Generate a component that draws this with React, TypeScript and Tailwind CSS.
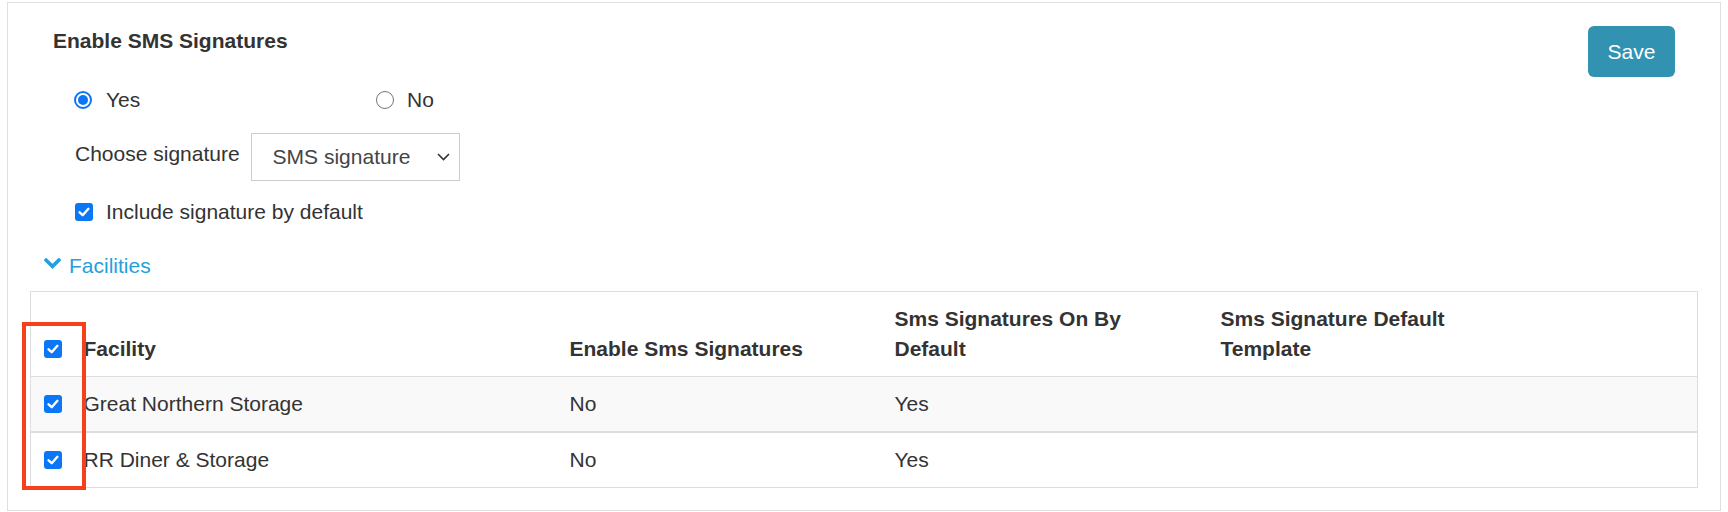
import React, { useState } from 'react'

interface FacilityRow {
  name: string
  enabled: string
  onByDefault: string
  template: string
}

const rows: FacilityRow[] = [
  { name: 'Great Northern Storage', enabled: 'No', onByDefault: 'Yes', template: '' },
  { name: 'RR Diner & Storage', enabled: 'No', onByDefault: 'Yes', template: '' }
]

const CheckBox = () => (
  <span className="flex h-[18px] w-[18px] shrink-0 items-center justify-center rounded-[3px] bg-[#0b76f6]">
    <svg width="12" height="10" viewBox="0 0 12 10">
      <path
        d="M1.6 5.3 L4.7 8.2 L10.4 1.8"
        fill="none"
        stroke="white"
        strokeWidth="2.4"
        strokeLinecap="round"
        strokeLinejoin="round"
      />
    </svg>
  </span>
)

const Radio = ({ checked }: { checked: boolean }) =>
  checked ? (
    <span className="flex h-[18px] w-[18px] shrink-0 items-center justify-center rounded-full border-2 border-[#0b76f6] bg-white">
      <span className="h-[10px] w-[10px] rounded-full bg-[#0b76f6]" />
    </span>
  ) : (
    <span className="h-[18px] w-[18px] shrink-0 rounded-full border-[1.5px] border-[#767676] bg-white" />
  )

export default function App() {
  const [enabled] = useState(true)

  return (
    <div
      className="h-[512px] w-full overflow-hidden bg-white text-[21px] leading-[30px] text-[#333]"
      style={{ fontFamily: '"Liberation Sans", Arial, sans-serif' }}
    >
      <div className="mx-[7px] mt-[2px] border border-[#dfdfdf] pb-[22px]">
        {/* header */}
        <div className="mt-[23px] flex items-start justify-between px-[45px]">
          <h3 className="font-bold leading-[30px]">Enable SMS Signatures</h3>
          <button className="h-[51px] w-[87px] rounded-[6px] bg-[#3193b1] text-white">Save</button>
        </div>

        {/* yes / no */}
        <div className="mt-[8px] flex h-[30px] items-center pl-[66px]">
          <label className="flex w-[302px] items-center gap-[14px]">
            <Radio checked={enabled} />
            <span>Yes</span>
          </label>
          <label className="flex items-center gap-[13px]">
            <Radio checked={!enabled} />
            <span>No</span>
          </label>
        </div>

        {/* choose signature */}
        <div className="mt-[18px] flex items-center gap-[11px] pl-[67px]">
          <span className="mb-[7px]">Choose signature</span>
          <div className="flex h-[48px] w-[209px] items-center justify-between border border-[#cccccc] bg-white pl-[21px] pr-[9px] text-[#444]">
            <span>SMS signature</span>
            <svg width="13" height="8" viewBox="0 0 13 8">
              <path d="M1 1 L6.5 6.5 L12 1" fill="none" stroke="#333" strokeWidth="1.6" />
            </svg>
          </div>
        </div>

        {/* include by default */}
        <div className="mt-[16px] flex h-[30px] items-center gap-[13px] pl-[67px]">
          <CheckBox />
          <span>Include signature by default</span>
        </div>

        {/* facilities toggle */}
        <div className="mt-[24px] flex h-[30px] items-center gap-[8px] pl-[36px] text-[#25a0dc]">
          <svg width="17" height="11" viewBox="0 0 17 11" className="mb-[5px]">
            <path d="M2.2 2.2 L8.5 8.4 L14.8 2.2" fill="none" stroke="#25a0dc" strokeWidth="3.6" strokeLinecap="square" />
          </svg>
          <span>Facilities</span>
        </div>

        {/* table */}
        <div className="relative mt-[10px] px-[22px]">
          <table className="w-full table-fixed border-collapse border border-[#dddddd]">
            <colgroup>
              <col className="w-[41px]" />
              <col className="w-[486px]" />
              <col className="w-[325px]" />
              <col className="w-[326px]" />
              <col />
            </colgroup>
            <thead>
              <tr className="border-b border-[#dddddd]">
                <th className="py-[12px] pl-[13px] pr-0 text-left align-bottom">
                  <div className="flex h-[30px] items-center">
                    <CheckBox />
                  </div>
                </th>
                <th className="px-[12px] py-[12px] text-left align-bottom font-bold">Facility</th>
                <th className="px-[12px] py-[12px] text-left align-bottom font-bold">Enable Sms Signatures</th>
                <th className="px-[12px] py-[12px] text-left align-bottom font-bold">
                  Sms Signatures On By
                  <br />
                  Default
                </th>
                <th className="px-[12px] py-[12px] text-left align-bottom font-bold">
                  Sms Signature Default
                  <br />
                  Template
                </th>
              </tr>
            </thead>
            <tbody>
              {rows.map((row, i) => (
                <tr
                  key={row.name}
                  className={i === 0 ? 'border-b-2 border-[#dddddd] bg-[#f9f9f9]' : 'bg-white'}
                >
                  <td className="py-[12px] pl-[13px] pr-0">
                    <div className="flex h-[30px] items-center">
                      <CheckBox />
                    </div>
                  </td>
                  <td className="px-[12px] py-[12px]">{row.name}</td>
                  <td className="px-[12px] py-[12px]">{row.enabled}</td>
                  <td className="px-[12px] py-[12px]">{row.onByDefault}</td>
                  <td className="px-[12px] py-[12px]">{row.template}</td>
                </tr>
              ))}
            </tbody>
          </table>

          {/* highlight */}
          <div className="pointer-events-none absolute left-[14px] top-[31px] h-[168px] w-[64px] border-4 border-[#f63f1b]" />
        </div>
      </div>
    </div>
  )
}
